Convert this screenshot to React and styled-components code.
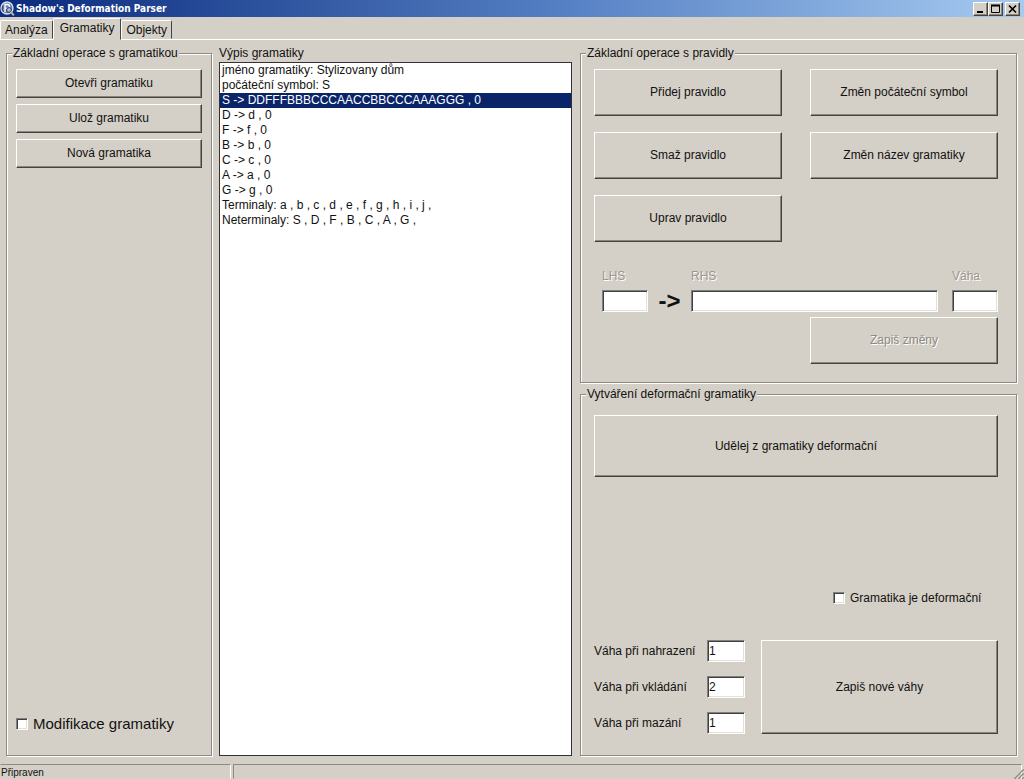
import React, { useState } from "react";
import styled, { createGlobalStyle, css } from "styled-components";

const GlobalStyle = createGlobalStyle`
  * {
    box-sizing: border-box;
  }
  body {
    margin: 0;
    background-color: #d5d0c7;
  }
  body, button, input, select {
    font-family: "Liberation Sans", Arial, sans-serif;
    font-size: 12px;
    line-height: 16px;
    color: #111;
  }
`;

const raised = css`
  border: 1px solid;
  border-color: #fff #45433f #45433f #fff;
  box-shadow: inset -1px -1px 0 #8a867e;
`;
const sunken = css`
  border: 1px solid;
  border-color: #808080 #fff #fff #808080;
  box-shadow: inset 1px 1px 0 #404040, inset -1px -1px 0 #e4e0d8;
`;

const Window = styled.div`
  display: flex;
  flex-direction: column;
  min-height: 100vh;
`;
const TitleBar = styled.header`
  display: flex;
  align-items: center;
  height: 17px;
  padding: 0 4px 0 0;
  background: linear-gradient(to right, #0a2a7c, #5580c4 55%, #a6caf0);
`;
const Title = styled.h1`
  flex: 1;
  margin: 0 0 0 1px;
  color: #fff;
  font-family: "DejaVu Sans Condensed", "DejaVu Sans", sans-serif;
  font-size: 10px;
  line-height: 16px;
  font-weight: bold;
`;
const WindowButton = styled.button`
  ${raised}
  display: flex;
  align-items: center;
  justify-content: center;
  width: 15px;
  height: 14px;
  padding: 0;
  margin-left: ${({ $apart }) => ($apart ? "2px" : "0")};
  background-color: #d5d0c7;
`;

const Tabs = styled.nav`
  display: flex;
  align-items: flex-end;
  height: 23px;
  border-bottom: 1px solid #fff;
`;
const Tab = styled.button`
  height: ${({ $active }) => ($active ? "22px" : "19px")};
  margin-bottom: ${({ $active }) => ($active ? "-1px" : "0")};
  padding: ${({ $active }) => ($active ? "0 6px 2px" : "0 4px")};
  border: 1px solid;
  border-color: #fff #45433f transparent #fff;
  border-radius: 2px 2px 0 0;
  background-color: #d5d0c7;
`;

const Main = styled.main`
  flex: 1;
  display: grid;
  grid-template-columns: 206fr 354fr 437fr;
  gap: 7px;
  padding: 5px 7px 8px 6px;
`;
const RightSide = styled.div`
  display: flex;
  flex-direction: column;
  gap: 3px;
`;
const Group = styled.fieldset`
  display: flex;
  flex-direction: column;
  flex: ${({ $grow }) => ($grow ? "1" : "none")};
  min-width: 0;
  margin: 0;
  padding: ${({ $pad }) => $pad};
  border: 1px solid #8d8a84;
  box-shadow: 1px 1px 0 #fff, inset 1px 1px 0 #fff;
`;
const Legend = styled.legend`
  margin-left: -${({ $pull }) => $pull || 0}px;
  padding: 0 1px;
  background-color: #d5d0c7;
`;

const Button = styled.button`
  ${raised}
  height: ${({ $h }) => $h}px;
  padding: 0 4px 1px;
  background-color: #d5d0c7;
  &:disabled {
    color: #8d8a84;
    text-shadow: 1px 1px 0 #fff;
  }
`;
const Stack = styled.div`
  display: flex;
  flex-direction: column;
  gap: 6px;
`;
const CheckLabel = styled.label`
  display: flex;
  align-items: center;
  gap: 5px;
  font-size: ${({ $large }) => ($large ? "15px" : "12px")};
`;
const CheckBox = styled.input`
  ${sunken}
  appearance: none;
  width: 12px;
  height: 12px;
  margin: 0;
  background-color: #fff;
  &:checked {
    background: linear-gradient(#111, #111) center / 4px 4px no-repeat #fff;
  }
`;
const BottomCheck = styled(CheckLabel)`
  margin-top: auto;
`;
const RightCheck = styled(CheckLabel)`
  align-self: flex-end;
  width: 165px;
  margin: auto 0 34px;
`;

const Listing = styled.div`
  display: flex;
  flex-direction: column;
  padding-right: 1px;
`;
const ListBox = styled.select`
  flex: 1;
  margin-top: 1px;
  padding: 0;
  border: 1px solid #333;
  border-radius: 0;
  outline: none;
  background-color: #fff;
  overflow: hidden;
  option {
    height: 15px;
    min-height: 15px;
    padding: 0 2px;
    line-height: 15px;
  }
  option:checked {
    background: linear-gradient(#0a246a, #0a246a);
    -webkit-text-fill-color: #fff;
  }
`;

const RuleButtons = styled.div`
  display: grid;
  grid-template-columns: 1fr 1fr;
  gap: 16px 28px;
`;
const RuleEditor = styled.div`
  display: flex;
  align-items: flex-end;
  margin: 26px 0 5px 8px;
`;
const Field = styled.label`
  display: flex;
  flex-direction: column;
  gap: 6px;
  flex: ${({ $grow }) => ($grow ? "1" : "none")};
  width: 46px;
  margin-left: ${({ $apart }) => ($apart ? "14px" : "0")};
  color: #9a968f;
  text-shadow: 1px 1px 0 #fff;
`;
const TextBox = styled.input`
  ${sunken}
  width: 100%;
  height: 22px;
  padding: 0 1px;
  border-radius: 0;
  background-color: #fff;
`;
const Arrow = styled.span`
  width: 43px;
  text-align: center;
  font-size: 24px;
  line-height: 22px;
  font-weight: bold;
`;
const SaveRow = styled(RuleButtons)`
  button {
    grid-column: 2;
  }
`;

const WeightsRow = styled.div`
  display: flex;
  gap: 16px;
`;
const Weights = styled.div`
  display: grid;
  grid-template-columns: 113px 38px;
  align-items: center;
  gap: 14px 0;
`;
const WeightsButton = styled(Button)`
  flex: 1;
`;

const StatusBar = styled.footer`
  display: flex;
  gap: 2px;
  height: 15px;
`;
const StatusPane = styled.div`
  flex: ${({ $wide }) => ($wide ? "1" : "0 0 231px")};
  border: 1px solid;
  border-color: #8d8a84 #fff transparent ${({ $wide }) => ($wide ? "#8d8a84" : "transparent")};
  font-size: 10px;
  line-height: 15px;
`;
const Grip = styled.svg`
  align-self: flex-end;
  margin-left: -12px;
`;

const grammar = [
  "jméno gramatiky: Stylizovany dům",
  "počáteční symbol: S",
  "S -> DDFFFBBBCCCAACCBBCCCAAAGGG , 0",
  "D -> d , 0",
  "F -> f , 0",
  "B -> b , 0",
  "C -> c , 0",
  "A -> a , 0",
  "G -> g , 0",
  "Terminaly: a , b , c , d , e , f , g , h , i , j ,",
  "Neterminaly: S , D , F , B , C , A , G ,",
];

const weights = [
  { id: "replace", label: "Váha při nahrazení", value: "1" },
  { id: "insert", label: "Váha při vkládání", value: "2" },
  { id: "remove", label: "Váha při mazání", value: "1" },
];

const AppIcon = () => (
  <svg width="15" height="16" viewBox="0 0 15 16" aria-hidden="true">
    <circle cx="7" cy="7" r="6" fill="#6d83b8" stroke="#d9dfec" strokeWidth="1.4" />
    <path d="M5 11V3.5h2.5a2 2 0 0 1 0 4H5" fill="none" stroke="#fff" strokeWidth="1.3" />
    <path d="M3 4.5 2 8l1.5 3" fill="none" stroke="#20396f" />
    <circle cx="9" cy="9" r="2.4" fill="#a9b9d8" stroke="#27365c" />
    <path d="m10.8 10.8 3 3.6" stroke="#c8b89a" strokeWidth="1.8" />
  </svg>
);

const App = () => {
  const [tab, setTab] = useState("Gramatiky");
  const [selected, setSelected] = useState("2");

  return (
    <>
      <GlobalStyle />
      <Window>
        <TitleBar>
          <AppIcon />
          <Title>Shadow's Deformation Parser</Title>
          <WindowButton aria-label="Minimalizovat">
            <svg width="11" height="10" viewBox="0 0 11 10">
              <path d="M2 8h6" stroke="#000" strokeWidth="2" />
            </svg>
          </WindowButton>
          <WindowButton aria-label="Maximalizovat">
            <svg width="11" height="10" viewBox="0 0 11 10">
              <path d="M1.5 1.5h8v7h-8z" fill="none" stroke="#000" />
              <path d="M1 1.5h9" stroke="#000" strokeWidth="2" />
            </svg>
          </WindowButton>
          <WindowButton $apart aria-label="Zavřít">
            <svg width="11" height="10" viewBox="0 0 11 10">
              <path d="m2 1.5 7 7m0-7-7 7" stroke="#000" strokeWidth="1.7" />
            </svg>
          </WindowButton>
        </TitleBar>

        <Tabs>
          {["Analýza", "Gramatiky", "Objekty"].map((name) => (
            <Tab key={name} $active={tab === name} onClick={() => setTab(name)}>
              {name}
            </Tab>
          ))}
        </Tabs>

        <Main>
          <Group $pad="8px 9px 23px">
            <Legend $pull={4}>Základní operace s gramatikou</Legend>
            <Stack>
              <Button $h={29}>Otevři gramatiku</Button>
              <Button $h={29}>Ulož gramatiku</Button>
              <Button $h={29}>Nová gramatika</Button>
            </Stack>
            <BottomCheck $large>
              <CheckBox type="checkbox" />
              Modifikace gramatiky
            </BottomCheck>
          </Group>

          <Listing>
            <label htmlFor="grammar">Výpis gramatiky</label>
            <ListBox
              id="grammar"
              size={11}
              value={selected}
              onChange={(e) => setSelected(e.target.value)}
            >
              {grammar.map((line, idx) => (
                <option key={idx} value={idx}>
                  {line}
                </option>
              ))}
            </ListBox>
          </Listing>

          <RightSide>
            <Group $pad="8px 18px 18px 13px">
              <Legend $pull={8}>Základní operace s pravidly</Legend>
              <RuleButtons>
                <Button $h={47}>Přidej pravidlo</Button>
                <Button $h={47}>Změn počáteční symbol</Button>
                <Button $h={47}>Smaž pravidlo</Button>
                <Button $h={47}>Změn název gramatiky</Button>
                <Button $h={47}>Uprav pravidlo</Button>
              </RuleButtons>
              <RuleEditor>
                <Field>
                  LHS
                  <TextBox disabled />
                </Field>
                <Arrow>-&gt;</Arrow>
                <Field $grow>
                  RHS
                  <TextBox disabled />
                </Field>
                <Field $apart>
                  Váha
                  <TextBox disabled />
                </Field>
              </RuleEditor>
              <SaveRow>
                <Button $h={47} disabled>
                  Zapiš změny
                </Button>
              </SaveRow>
            </Group>

            <Group $grow $pad="13px 18px 21px 13px">
              <Legend $pull={8}>Vytváření deformační gramatiky</Legend>
              <Button $h={62}>Udělej z gramatiky deformační</Button>
              <RightCheck>
                <CheckBox type="checkbox" />
                Gramatika je deformační
              </RightCheck>
              <WeightsRow>
                <Weights>
                  {weights.map(({ id, label, value }) => (
                    <React.Fragment key={id}>
                      <label htmlFor={id}>{label}</label>
                      <TextBox id={id} defaultValue={value} />
                    </React.Fragment>
                  ))}
                </Weights>
                <WeightsButton $h={94}>Zapiš nové váhy</WeightsButton>
              </WeightsRow>
            </Group>
          </RightSide>
        </Main>

        <StatusBar>
          <StatusPane>Připraven</StatusPane>
          <StatusPane $wide />
          <Grip width="12" height="12" viewBox="0 0 12 12" aria-hidden="true">
            <path d="M1 12 12 1M5 12l7-7M9 12l3-3" stroke="#fff" />
            <path d="M2 12 12 2M6 12l6-6M10 12l2-2" stroke="#8d8a84" strokeWidth="1.5" />
          </Grip>
        </StatusBar>
      </Window>
    </>
  );
};

export default App;
